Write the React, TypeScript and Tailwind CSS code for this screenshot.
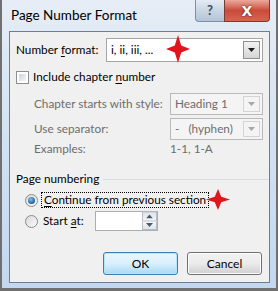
import React from 'react';

const Star: React.FC<{ className?: string; w: number; h: number }> = ({ className, w, h }) => (
  <svg className={className} width={w} height={h} viewBox="0 0 24 28" preserveAspectRatio="none">
    <path d="M12 0 L15.2 10.4 L24 14 L15.2 17.6 L12 28 L8.8 17.6 L0 14 L8.8 10.4 Z" fill="#e2151d" />
  </svg>
);

const Arrow: React.FC<{ color: string }> = ({ color }) => (
  <svg width="7" height="4" viewBox="0 0 7 4">
    <path d="M0 0 H7 L3.5 4 Z" fill={color} />
  </svg>
);

const Combo: React.FC<{ value: string; disabled?: boolean; className: string }> = ({ value, disabled, className }) => (
  <div
    className={`shrink-0 flex items-center border ${disabled ? 'border-[#b9b9b9] bg-[#f4f4f4] text-[#6d6d6d]' : 'border-[#a5a5a5] bg-white text-black'} ${className}`}
  >
    <span className="flex-1 pl-[4px] whitespace-pre">{value}</span>
    <div
      className={`mr-[2px] w-[17px] h-[calc(100%-4px)] flex items-center justify-center border ${disabled ? 'border-[#d4d4d4] bg-[#f4f4f4]' : 'border-[#8f8f8f] bg-gradient-to-b from-[#f2f2f2] to-[#d5d5d5]'}`}
    >
      <Arrow color={disabled ? '#a8a8a8' : '#1a1a1a'} />
    </div>
  </div>
);

const Radio: React.FC<{ checked?: boolean }> = ({ checked }) => (
  <div className="shrink-0 w-[13px] h-[13px] rounded-full border border-[#8a8a8a] bg-gradient-to-br from-[#dadada] to-[#fbfbfb] flex items-center justify-center">
    {checked && (
      <div className="w-[7px] h-[7px] rounded-full bg-[radial-gradient(circle_at_40%_35%,#7fc2ee,#1f5e93_70%)]" />
    )}
  </div>
);

export default function App() {
  return (
    <div className="w-[278px] h-[291px] bg-[#707070] px-[2px] pb-[3px] flex flex-col font-['Lato',sans-serif] text-[11.75px] leading-none text-black whitespace-nowrap">
      <div className="flex-1 flex flex-col bg-gradient-to-b from-[#e6edf6] via-[#d2e1f2] to-[#c3d8f0]">
        {/* title bar */}
        <div className="h-[31px] flex items-start">
          <span className="pl-[9px] pt-[9px] text-[13.5px]">Page Number Format</span>
          <div className="ml-auto mr-[6px] flex h-[22px]">
            <div className="w-[29px] flex items-center justify-center rounded-bl-[4px] border border-t-0 border-r-0 border-[#7f8fa3] bg-gradient-to-b from-[#e4ebf3] via-[#c9d5e3] to-[#b5c5d8] text-[#3a4a5c] font-bold text-[13px]">
              ?
            </div>
            <div className="w-[46px] flex items-center justify-center rounded-br-[4px] border border-t-0 border-[#7a3a34] bg-gradient-to-b from-[#e9a99c] via-[#c84a3b] to-[#d8654f]">
              <span className="text-white font-bold text-[14px] font-['DejaVu_Sans',sans-serif] [text-shadow:0_0_2px_#3b1610]">X</span>
            </div>
          </div>
        </div>

        {/* client area */}
        <div className="relative ml-[7px] mr-[6px] h-[252px] border border-[#6c7e93] bg-[#f0f0f0] flex flex-col">
          <div className="mt-[6px] h-[24px] flex items-center pl-[6px]">
            <span className="w-[90px] shrink-0">
              Number <u className="underline-offset-2">f</u>ormat:
            </span>
            <Combo value="i, ii, iii, ..." className="w-[157px] h-[24px]" />
          </div>

          <div className="mt-[4px] h-[22px] flex items-center pl-[6px]">
            <div className="w-[13px] h-[13px] border border-[#8e8f8f] bg-white p-[2px]">
              <div className="w-full h-full bg-gradient-to-br from-[#cfd3d8] to-[#f5f5f5]" />
            </div>
            <span className="ml-[4px]">
              Include chapter <u className="underline-offset-2">n</u>umber
            </span>
          </div>

          <div className="mt-[5px] h-[22px] flex items-center pl-[24px] text-[#6d6d6d]">
            <span className="w-[136px] shrink-0">Chapter starts with style:</span>
            <Combo value="Heading 1" disabled className="w-[93px] h-[22px]" />
          </div>

          <div className="mt-[3px] h-[22px] flex items-center pl-[24px] text-[#6d6d6d]">
            <span className="w-[136px] shrink-0">Use separator:</span>
            <Combo value={'-   (hyphen)'} disabled className="w-[93px] h-[22px]" />
          </div>

          <div className="h-[18px] flex items-center pl-[24px] text-[#6d6d6d]">
            <span className="w-[136px] shrink-0">Examples:</span>
            <span>1-1, 1-A</span>
          </div>

          <div className="mt-[12px] h-[18px] flex items-center pl-[6px]">
            <span className="w-[87px] shrink-0">Page numbering</span>
            <div className="flex-1 h-px bg-[#d5dde6]" />
          </div>

          <div className="mt-[3px] h-[18px] flex items-center pl-[15px]">
            <Radio checked />
            <div className="ml-[3px] h-[16px] flex items-center border border-dotted border-black px-[2px]">
              <span>
                <u className="underline-offset-2">C</u>ontinue from previous section
              </span>
            </div>
          </div>

          <div className="mt-[2px] h-[20px] flex items-center pl-[15px]">
            <Radio />
            <span className="ml-[5px] w-[52px] shrink-0">
              Start <u className="underline-offset-2">a</u>t:
            </span>
            <div className="w-[63px] h-[20px] border border-[#abadb3] bg-white flex justify-end">
              <div className="w-[15px] flex flex-col">
                <div className="flex-1 flex items-center justify-center border border-[#b8bcc4] bg-gradient-to-b from-[#f4f6f9] to-[#dfe4ea] rotate-180">
                  <Arrow color="#4a5a6e" />
                </div>
                <div className="flex-1 flex items-center justify-center border border-t-0 border-[#b8bcc4] bg-gradient-to-b from-[#f4f6f9] to-[#dfe4ea]">
                  <Arrow color="#4a5a6e" />
                </div>
              </div>
            </div>
          </div>

          <div className="mt-auto mb-[7px] mr-[7px] flex justify-end gap-[9px] text-[12px]">
            <button className="w-[75px] h-[23px] rounded-[3px] border border-[#3c7fb1] bg-gradient-to-b from-[#eaf6fd] via-[#d9f0fc] to-[#a7d9f5] shadow-[inset_0_0_0_1px_#b9e3f9] text-black">
              OK
            </button>
            <button className="w-[75px] h-[23px] rounded-[3px] border border-[#707070] bg-gradient-to-b from-[#f2f2f2] via-[#ebebeb] to-[#cfcfcf] shadow-[inset_0_0_0_1px_#fcfcfc] text-black">
              Cancel
            </button>
          </div>

          <Star w={24} h={28} className="absolute left-[156px] top-[3px]" />
          <Star w={24} h={21} className="absolute left-[196px] top-[157px]" />
        </div>

        <div className="h-[5px]" />
      </div>
    </div>
  );
}
